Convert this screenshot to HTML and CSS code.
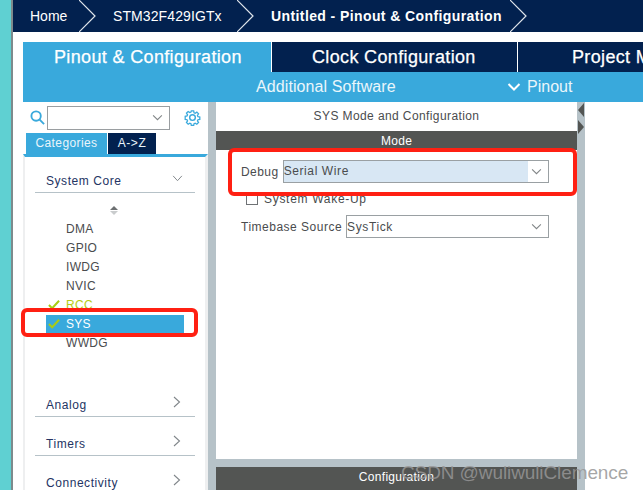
FILE: index.html
```html
<!DOCTYPE html>
<html lang="en">
<head>
<meta charset="utf-8">
<title>Pinout &amp; Configuration</title>
<link rel="stylesheet" href="styles.css">
</head>
<body>
<div class="app">
  <div class="strip"></div>
  <div class="edge"></div>
  <div class="main">
    <header class="crumbs">
      <span class="crumb crumb-home">Home</span>
      <svg class="crumb-arrow" viewBox="0 0 18 32"><path d="M0 0L16 16L0 32"/></svg>
      <span class="crumb crumb-chip">STM32F429IGTx</span>
      <svg class="crumb-arrow" viewBox="0 0 18 32"><path d="M0 0L16 16L0 32"/></svg>
      <span class="crumb crumb-title">Untitled - Pinout &amp; Configuration</span>
      <svg class="crumb-arrow" viewBox="0 0 18 32"><path d="M0 0L16 16L0 32"/></svg>
    </header>
    <div class="work">
      <nav class="tabs">
        <div class="tab tab-active">Pinout &amp; Configuration</div>
        <div class="tab tab-clock">Clock Configuration</div>
        <div class="tab tab-project">Project Manager</div>
      </nav>
      <div class="subbar">
        <span class="sub-software">Additional Software</span>
        <svg class="sub-chevron" viewBox="0 0 14 10"><path d="M1.5 2L7 7.5L12.5 2"/></svg>
        <span>Pinout</span>
      </div>
      <div class="panes">
        <aside class="left">
          <div class="search">
            <svg class="search-icon" viewBox="0 0 16 16"><circle cx="6.5" cy="6.5" r="5"/><path d="M10 10L15 15"/></svg>
            <div class="search-box"><svg class="chev" viewBox="0 0 12 8"><path d="M1 1.5L6 6.5L11 1.5"/></svg></div>
            <svg class="gear" viewBox="0 0 18 18"><circle cx="9" cy="9" r="3"/><path d="M7.6 1.2h2.8l.4 2.2 1.4.6 1.9-1.3 2 2-1.3 1.9.6 1.4 2.2.4v2.8l-2.2.4-.6 1.4 1.3 1.9-2 2-1.9-1.3-1.4.6-.4 2.2H7.6l-.4-2.2-1.4-.6-1.9 1.3-2-2 1.3-1.9-.6-1.4-2.2-.4V7.6l2.2-.4.6-1.4-1.3-1.9 2-2 1.9 1.3 1.4-.6z" transform="translate(.9 .9) scale(.9)"/></svg>
          </div>
          <div class="view-tabs">
            <span class="view view-on">Categories</span>
            <span class="view view-off">A-&gt;Z</span>
          </div>
          <div class="list">
            <div class="cat cat-core">
              <span>System Core</span>
              <svg class="cat-chev" viewBox="0 0 12 8"><path d="M1 1L6 6.5L11 1"/></svg>
            </div>
            <div class="sorter"><i class="sort-up"></i><i class="sort-down"></i></div>
            <ul class="items">
              <li class="item">DMA</li>
              <li class="item">GPIO</li>
              <li class="item">IWDG</li>
              <li class="item">NVIC</li>
              <li class="item item-ok"><svg class="check" viewBox="0 0 13 11"><path d="M1 6L4.5 9.5L12 1.5"/></svg>RCC</li>
              <li class="item item-sel"><svg class="check" viewBox="0 0 13 11"><path d="M1 6L4.5 9.5L12 1.5"/></svg>SYS</li>
              <li class="item">WWDG</li>
            </ul>
            <div class="cat cat-analog"><span>Analog</span><svg class="cat-arrow" viewBox="0 0 8 12"><path d="M1 1L6.5 6L1 11"/></svg></div>
            <div class="cat"><span>Timers</span><svg class="cat-arrow" viewBox="0 0 8 12"><path d="M1 1L6.5 6L1 11"/></svg></div>
            <div class="cat"><span>Connectivity</span><svg class="cat-arrow" viewBox="0 0 8 12"><path d="M1 1L6.5 6L1 11"/></svg></div>
          </div>
        </aside>
        <div class="gutter"></div>
        <section class="center">
          <div class="mode-pane">
            <h2 class="pane-title">SYS Mode and Configuration</h2>
            <div class="band">Mode</div>
            <div class="form">
              <div class="row row-debug">
                <label class="lbl">Debug</label>
                <div class="select select-debug"><span class="sel-text">Serial Wire</span><svg class="chev" viewBox="0 0 12 8"><path d="M1 1.5L6 6.5L11 1.5"/></svg></div>
              </div>
              <div class="row row-check">
                <span class="box"></span><span class="lbl lbl-wake">System Wake-Up</span>
              </div>
              <div class="row row-time">
                <label class="lbl lbl-time">Timebase Source</label>
                <div class="select select-time"><span class="sel-plain">SysTick</span><svg class="chev" viewBox="0 0 12 8"><path d="M1 1.5L6 6.5L11 1.5"/></svg></div>
              </div>
            </div>
          </div>
          <div class="band band-config">Configuration</div>
        </section>
        <div class="gutter gutter-right">
          <svg class="collapse" viewBox="0 0 8 32"><path d="M7 1V15L1 8Z"/><path d="M1 18V32L7 25Z"/></svg>
        </div>
      </div>
    </div>
  </div>
  <div class="mark mark-sys"></div>
  <div class="mark mark-debug"></div>
  <div class="watermark">CSDN @wuliwuliClemence</div>
</div>
</body>
</html>
```
FILE: styles.css
```css
* { box-sizing: border-box; }
html, body { margin: 0; padding: 0; background: #fff; }
body { font-family: "Liberation Sans", Arial, sans-serif; }
.app { position: relative; display: flex; width: 643px; height: 490px; overflow: hidden; background: #fff; }
.strip { width: 11px; background: #5fd0d2; flex: none; }
.edge { width: 2px; background: #7d8a8c; flex: none; }
.main { width: 630px; flex: none; display: flex; flex-direction: column; }

.crumbs { height: 32px; background: #02214f; color: #fff; display: flex; align-items: center; font-size: 14px; flex: none; }
.crumb { white-space: nowrap; flex: none; }
.crumb-home { margin-left: 17px; width: 49px; }
.crumb-chip { margin-left: 16px; width: 124px; letter-spacing: .1px; }
.crumb-title { margin-left: 16px; width: 239px; font-weight: 700; letter-spacing: .4px; }
.crumb-arrow { width: 18px; height: 32px; flex: none; fill: none; stroke: #dfe5ec; stroke-width: 1.2; }

.work { margin: 10px 0 0 10px; display: flex; flex-direction: column; flex: 1; min-height: 0; }
.tabs { display: flex; height: 30px; flex: none; background: #02214f; }
.tab { flex: none; font-size: 18px; line-height: 30px; color: #fff; white-space: nowrap; -webkit-text-stroke: .25px #fff; letter-spacing: .35px; }
.tab-active { width: 248px; background: #39a9dc; padding-left: 31px; }
.tab-clock { width: 247px; padding-left: 40px; border-left: 1px solid #fff; border-right: 1px solid #fff; }
.tab-project { padding-left: 54px; }

.subbar { height: 30px; flex: none; background: #39a9dc; color: #eaf6fb; display: flex; align-items: center; font-size: 16px; }
.sub-software { margin-left: 233px; width: 251px; letter-spacing: .1px; }
.sub-chevron { width: 14px; height: 10px; margin-right: 6px; fill: none; stroke: #fff; stroke-width: 2; }

.panes { display: flex; flex: 1; min-height: 0; }
.left { width: 185px; flex: none; display: flex; flex-direction: column; background: #fff; }
.gutter { width: 8px; flex: none; background: #b6c2c8; }
.gutter-right { position: relative; }
.collapse { display: block; width: 8px; height: 32px; fill: #535553; }

.search { height: 31px; display: flex; align-items: center; padding-left: 7px; flex: none; }
.search-icon { width: 15px; height: 15px; fill: none; stroke: #39a9dc; stroke-width: 2; flex: none; }
.search-box { width: 123px; height: 24px; margin-left: 2px; border: 1px solid #9a9ea1; display: flex; align-items: center; justify-content: flex-end; padding-right: 6px; flex: none; }
.chev { width: 11px; height: 7px; fill: none; stroke: #808486; stroke-width: 1.2; flex: none; }
.gear { width: 17px; height: 17px; margin-left: 14px; fill: none; stroke: #39a9dc; stroke-width: 1.5; flex: none; }

.view-tabs { display: flex; height: 21px; margin-left: 3px; flex: none; }
.view { font-size: 12px; line-height: 21px; color: #e9f5fb; letter-spacing: .4px; text-align: center; }
.view-on { width: 81px; background: #39a9dc; }
.view-off { width: 48px; margin-left: 1px; background: #02214f; letter-spacing: .6px; }

.list { flex: 1; min-height: 0; border-top: 3px solid #39a9dc; border-left: 2px solid #eeeff0; border-right: 3px solid #eeeff0; padding: 0 10px; overflow: hidden; }
.cat { display: flex; justify-content: space-between; align-items: center; height: 26px; margin-top: 13px; padding: 0 12px 0 11px; border-bottom: 1px solid #b6c2c8; color: #243463; font-size: 12px; letter-spacing: .55px; }
.cat-core { margin-top: 10px; height: 26px; }
.cat-analog { margin-top: 38px; }
.cat span { position: relative; top: 1px; }
.cat-chev { width: 11px; height: 7px; fill: none; stroke: #80868a; stroke-width: 1.1; position: relative; top: -1px; }
.cat-arrow { width: 8px; height: 12px; fill: none; stroke: #80868a; stroke-width: 1.1; position: relative; top: -2px; right: 2px; }

.sorter { display: flex; flex-direction: column; align-items: center; gap: 1px; height: 27px; padding-top: 13px; width: 136px; margin-left: 11px; }
.sort-up { width: 0; height: 0; border: 4px solid transparent; border-top: 0; border-bottom: 4px solid #6d7072; }
.sort-down { width: 0; height: 0; border: 4px solid transparent; border-bottom: 0; border-top: 4px solid #c9cccd; }

.items { list-style: none; margin: 0 0 0 11px; padding: 0; width: 138px; }
.item { height: 19px; line-height: 19px; padding-left: 20px; font-size: 12px; color: #4a4c4e; letter-spacing: .3px; position: relative; }
.item-ok { color: #b6cc12; }
.item-sel { background: #39a9dc; color: #fff; }
.check { position: absolute; left: 2px; top: 3px; width: 12px; height: 11px; fill: none; stroke: #a8cc14; stroke-width: 2.2; }

.center { width: 361px; flex: none; display: flex; flex-direction: column; min-height: 0; background: #b6c2c8; }
.mode-pane { height: 357px; flex: none; background: #fff; }
.pane-title { margin: 0; height: 29px; line-height: 28px; font-size: 12px; font-weight: 400; color: #4a4c4e; text-align: center; letter-spacing: .4px; }
.band { height: 19px; line-height: 20px; background: #535553; color: #fff; font-size: 12px; text-align: center; flex: none; letter-spacing: .3px; }
.band-config { margin-top: 8px; height: 23px; line-height: 20px; }

.form { display: flex; flex-direction: column; padding: 10px 28px 0 25px; }
.row { display: flex; align-items: center; font-size: 12px; color: #4a4c4e; letter-spacing: .45px; }
.lbl { white-space: nowrap; }
.lbl-wake { letter-spacing: .7px; }
.lbl-time { letter-spacing: .5px; }
.row-debug { height: 23px; gap: 4px; }
.row-check { height: 12px; margin-top: 10px; padding-left: 5px; gap: 6px; }
.row-time { height: 23px; margin-top: 10px; gap: 4px; }
.box { width: 12px; height: 12px; border: 1px solid #6f7275; flex: none; }
.select { height: 23px; display: flex; align-items: center; justify-content: space-between; border: 1px solid #9aa0a3; padding-right: 6px; background: #fff; margin-left: auto; }
.select-debug { width: 267px; }
.select-time { width: 203px; }
.sel-text { width: 244px; height: 21px; line-height: 21px; background: #d8e7f4; letter-spacing: .6px; }
.sel-plain { letter-spacing: .6px; }

.mark { position: absolute; border: 4px solid #ff2013; border-radius: 6px; pointer-events: none; }
.mark-sys { left: 21px; top: 308px; width: 177px; height: 29px; }
.mark-debug { left: 228px; top: 148px; width: 349px; height: 48px; }
.watermark { position: absolute; left: 401px; top: 463px; font-size: 19px; line-height: 20px; letter-spacing: -.1px; color: rgba(150, 150, 150, .85); white-space: nowrap; }
```
